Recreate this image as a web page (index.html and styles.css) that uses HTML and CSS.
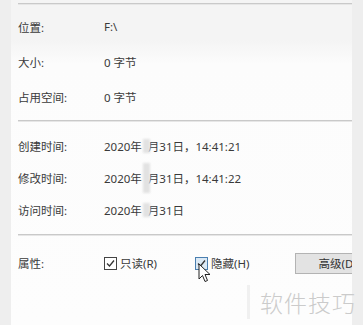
FILE: index.html
```html
<!DOCTYPE html>
<html lang="zh-CN">
<head>
    <meta charset="UTF-8">
    <meta name="viewport" content="width=device-width, initial-scale=1.0">
    <title>属性</title>
    <link rel="stylesheet" href="styles.css">
</head>
<body>
    <div class="panel">
        <div class="sep"></div>

        <div class="group group-size">
            <div class="row"><span class="label">位置:</span><span class="value">F:\</span></div>
            <div class="row"><span class="label">大小:</span><span class="value">0 字节</span></div>
            <div class="row"><span class="label">占用空间:</span><span class="value">0 字节</span></div>
        </div>

        <div class="sep"></div>

        <div class="group group-time">
            <div class="row"><span class="label">创建时间:</span><span class="value">2020年<span class="mask"></span>月31日，14:41:21</span></div>
            <div class="row"><span class="label">修改时间:</span><span class="value">2020年<span class="mask mask-tall"></span>月31日，14:41:22</span></div>
            <div class="row"><span class="label">访问时间:</span><span class="value">2020年<span class="mask"></span>月31日</span></div>
        </div>

        <div class="sep"></div>

        <div class="attr-row">
            <span class="label">属性:</span>
            <label class="check">
                <span class="box">
                    <svg width="11" height="11" viewBox="0 0 11 11"><path d="M2 5.5 L4.5 8 L9 2.5" fill="none" stroke="#333" stroke-width="1.3"/></svg>
                </span>只读(R)
            </label>
            <label class="check check-hover">
                <span class="box">
                    <svg width="11" height="11" viewBox="0 0 11 11"><path d="M2 5.5 L4.5 8 L9 2.5" fill="none" stroke="#333" stroke-width="1.3"/></svg>
                </span>隐藏(H)
                <svg class="cursor" width="13" height="20" viewBox="0 0 13 20"><path d="M1 1 L1 16 L4.5 12.5 L7 18.5 L9.5 17.5 L7 11.5 L12 11.5 Z" fill="#fff" stroke="#222" stroke-width="1"/></svg>
            </label>
            <button class="adv">高级(D)...</button>
        </div>
    </div>
    <div class="watermark">软件技巧</div>
</body>
</html>
```

FILE: styles.css
```css
body {
    margin: 0;
    background: #eeeeee;
    font-family: "Noto Sans", "Noto Sans CJK SC", sans-serif;
    font-size: 11.5px;
    color: #3a3a3a;
    width: 363px;
    height: 325px;
    overflow: hidden;
    position: relative;
}
.panel {
    margin-left: 11px;
    width: 341px;
    height: 325px;
    background: linear-gradient(#f4f4f4 0, #f4f4f4 40px, #fcfcfc 64px, #fdfdfd 100%);
    padding-top: 3px;
    box-sizing: border-box;
    overflow: hidden;
    white-space: nowrap;
}
.sep {
    margin-left: 7px;
    height: 1px;
    background: #c9c9c9;
    border-bottom: 1px solid #e6e6e6;
}
.group {
    display: flex;
    flex-direction: column;
}
.group-size {
    padding: 4px 0 6px;
}
.group-size .row {
    height: 35px;
}
.group-time {
    padding: 8px 0 8px;
}
.group-time .row {
    height: 32px;
}
.row {
    display: flex;
    align-items: center;
}
.label {
    width: 86px;
    padding-left: 7px;
    flex-shrink: 0;
}
.value {
    display: flex;
    align-items: center;
}
.mask {
    display: inline-block;
    width: 7px;
    height: 14px;
    margin: 0 -2px 0 1px;
    background: #e2e2e2;
    filter: blur(1px);
}
.mask-tall {
    height: 30px;
}
.attr-row {
    display: flex;
    align-items: center;
    height: 30px;
    margin-top: 12px;
}
.check {
    display: flex;
    align-items: center;
    gap: 3px;
    position: relative;
    flex-shrink: 0;
}
.check + .check {
    margin-left: 38px;
}
.box {
    width: 11px;
    height: 11px;
    border: 1px solid #444;
    background: #fff;
    display: flex;
}
.check-hover .box {
    border-color: #4a7fb0;
    background: #dbe9f5;
}
.cursor {
    position: absolute;
    left: 3px;
    top: 8px;
}
.adv {
    margin-left: 46px;
    width: 80px;
    height: 21px;
    background: #e3e3e3;
    border: 1px solid #b3b3b3;
    font-family: inherit;
    font-size: 11.5px;
    color: #333;
    padding: 0 0 0 22px;
    text-align: left;
    flex-shrink: 0;
    white-space: nowrap;
}
.watermark {
    position: absolute;
    left: 247px;
    top: 285px;
    font-family: "Noto Sans CJK SC", sans-serif;
    font-size: 23px;
    font-weight: 300;
    letter-spacing: 1px;
    color: #cbcbcb;
    border-left: 3px solid #f0f0f0;
    padding-left: 10px;
    white-space: nowrap;
}
```
